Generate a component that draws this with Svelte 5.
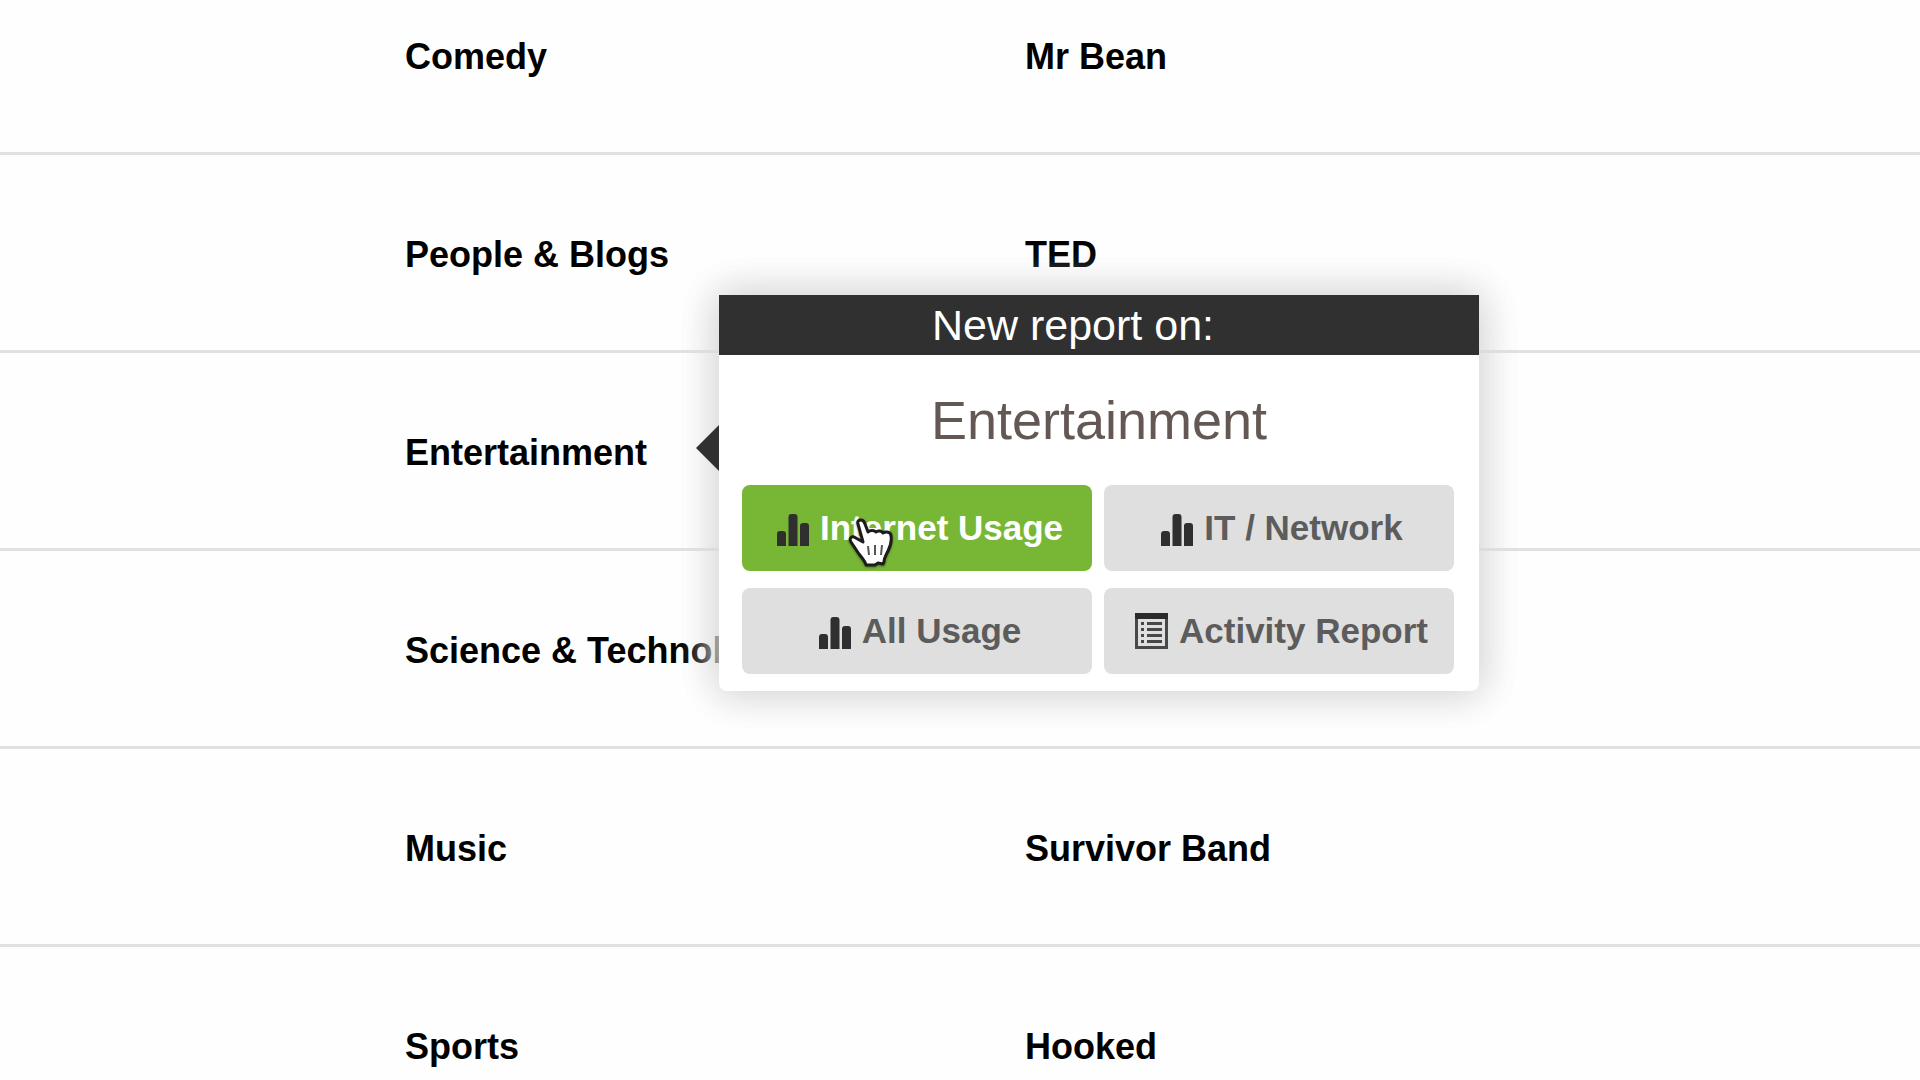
<script>
  const rows = [
    { category: "Comedy", channel: "Mr Bean" },
    { category: "People & Blogs", channel: "TED" },
    { category: "Entertainment", channel: "" },
    { category: "Science & Technology", channel: "" },
    { category: "Music", channel: "Survivor Band" },
    { category: "Sports", channel: "Hooked" },
  ];

  const reports = [
    { label: "Internet Usage", icon: "bars" },
    { label: "IT / Network", icon: "bars" },
    { label: "All Usage", icon: "bars" },
    { label: "Activity Report", icon: "list" },
  ];

  let selected = "Entertainment";
  let active = "Internet Usage";
</script>

<main>
  <table>
    <tbody>
      {#each rows as row}
        <tr>
          <td class="category">
            {row.category}
            {#if row.category === selected}
              <div class="popup" role="dialog" aria-label="New report">
                <div class="popup-header">New report on:</div>
                <h2>{selected}</h2>
                <div class="reports">
                  {#each reports as report}
                    <button
                      class:active={report.label === active}
                      on:click={() => (active = report.label)}
                    >
                      <svg width="38" height="36" viewBox="0 0 38 36" aria-hidden="true">
                        {#if report.icon === "bars"}
                          <path
                            d="M6 36V24q0-3 3-3h3q3 0 3 3v12zM17.5 36V7q0-3 3-3h3q3 0 3 3v29zM29 36V16q0-3 3-3h3q3 0 3 3v20z"
                            fill="#2f2f2f"
                          />
                        {:else}
                          <rect x="6.5" y="1.5" width="30" height="33" fill="none" stroke="#484848" stroke-width="3" />
                          <path d="M5 0h33v6H5z" fill="#2a2a2a" />
                          <path
                            d="M11 10.5h3M11 16.5h3M11 22.5h3M11 28.5h3M17 10.5h15M17 16.5h15M17 22.5h15M17 28.5h15"
                            stroke="#484848"
                            stroke-width="3"
                          />
                        {/if}
                      </svg>
                      {report.label}
                    </button>
                  {/each}
                </div>
                <svg class="pointer" width="46" height="50" viewBox="0 0 46 50" aria-hidden="true">
                  <path
                    d="M10 7C9 4 11 3 13 3c2 0 3 1 4 4l3 8c2-2 6-2 8 0 2-2 6-1 7 1 3-2 8-1 8 3 1 6-1 11-3 15-2 4-4 7-4 11l-1 2-5-1-3 2H18c-1-4-4-7-7-11L3 25c-2-3 0-6 3-5l9 5z"
                    fill="#fff"
                    stroke="#1c1c1c"
                    stroke-width="3"
                    stroke-linejoin="round"
                  />
                  <path d="M20 29l1 9M27 28v10M34 28l-1 10" stroke="#555" stroke-width="2" />
                </svg>
              </div>
            {/if}
          </td>
          <td>{row.channel}</td>
        </tr>
      {/each}
    </tbody>
  </table>
</main>

<style>
  :global(body) {
    background: #fefefe;
    font-family: "Liberation Sans", Arial, sans-serif;
  }

  main {
    height: 100vh;
    overflow: hidden;
  }

  /* List is scrolled part of the way through its first row */
  table {
    width: 100%;
    margin-top: -43px;
    border-collapse: separate;
    border-spacing: 0;
    table-layout: fixed;
  }

  td {
    box-sizing: border-box;
    padding: 80px 0 75px;
    border-bottom: 3px solid #e1e1e1;
    color: #000;
    font-size: 36px;
    font-weight: 700;
    line-height: 40px;
    white-space: nowrap;
  }

  .category {
    position: relative;
    width: 1025px;
    padding-left: 405px;
  }

  .popup {
    position: absolute;
    top: -58px;
    left: 719px;
    z-index: 10;
    width: 760px;
    background: #fff;
    border-radius: 0 0 8px 8px;
    box-shadow:
      0 0 40px #dadada,
      0 0 40px #dadada;
  }

  .popup::before {
    content: "";
    position: absolute;
    top: 130px;
    right: 100%;
    border: 23px solid transparent;
    border-left-width: 0;
    border-right-color: #303030;
  }

  .popup-header {
    padding-right: 52px;
    background: #303030;
    color: #fff;
    font-size: 43px;
    font-weight: 400;
    line-height: 60px;
    text-align: center;
  }

  h2 {
    margin: 0;
    padding: 35px 0;
    color: #635854;
    font-size: 54px;
    font-weight: 400;
    line-height: 60px;
    text-align: center;
  }

  .reports {
    display: grid;
    grid-template-columns: 1fr 1fr;
    gap: 17px 12px;
    padding: 0 25px 17px 23px;
  }

  button {
    display: flex;
    justify-content: center;
    align-items: center;
    gap: 11px;
    height: 86px;
    padding: 0;
    border: none;
    border-radius: 8px;
    background: #dfdfdf;
    color: #5c5c5c;
    font-family: inherit;
    font-size: 35px;
    font-weight: 700;
    line-height: 40px;
    cursor: pointer;
  }

  button.active {
    background: #77b735;
    color: #fff;
  }

  .pointer {
    position: absolute;
    top: 222px;
    left: 129px;
    pointer-events: none;
    filter: drop-shadow(0 1px 1px rgba(0, 0, 0, 0.4));
  }
</style>
